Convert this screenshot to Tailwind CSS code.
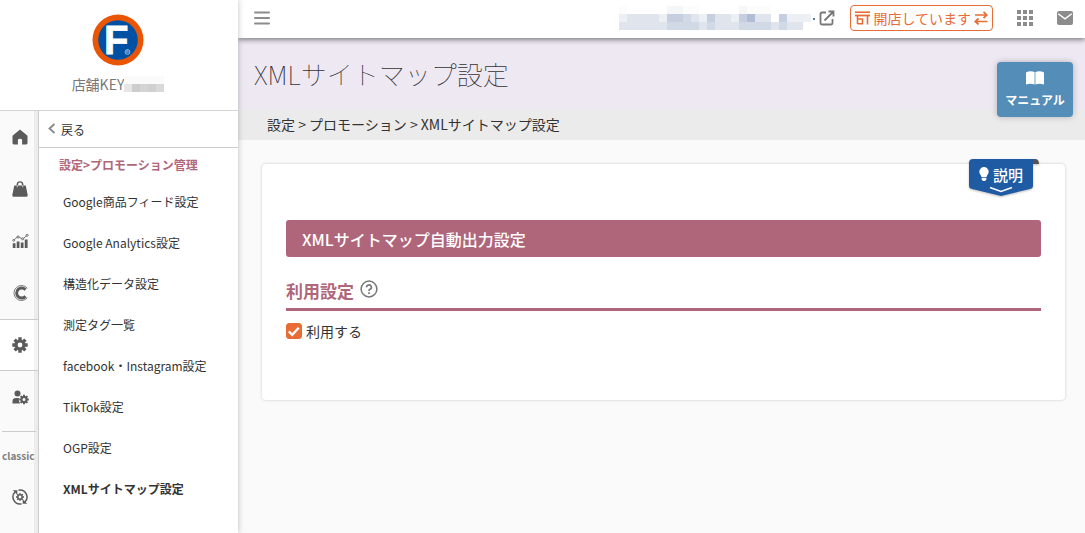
<!DOCTYPE html>
<html lang="ja">
<head>
    <meta charset="UTF-8">
    <meta name="viewport" content="width=device-width, initial-scale=1.0">
    <title>XMLサイトマップ設定</title>
    <script src="https://cdn.jsdelivr.net/npm/@tailwindcss/browser@4"></script>
</head>
<body class="min-h-screen flex bg-[#fafafa] text-[#333] font-['Noto_Sans_CJK_JP',sans-serif]">

    <!-- Sidebar -->
    <aside class="relative z-20 w-[238px] shrink-0 min-h-screen flex flex-col bg-white shadow-[0_0_6px_rgba(0,0,0,0.25)]">
        <div class="h-[111px] pt-[14px] pr-[2px] flex flex-col items-center border-b border-[#d4d4d4]">
            <svg class="w-[52px] h-[52px]" viewBox="0 0 52 52" role="img" aria-label="F">
                <circle cx="26" cy="26" r="25.5" fill="#ea5504"/>
                <circle cx="26" cy="26" r="19.8" fill="#0050a4"/>
                <text x="12" y="40" font-family="Liberation Sans, sans-serif" font-weight="700" font-size="40" fill="#fff" stroke="#fff" stroke-width="0.8">F</text>
                <circle cx="35.5" cy="38" r="2.4" fill="none" stroke="#b9cfe8" stroke-width="0.8"/>
                <path d="M34.8 39.4v-2.7h1.1l.4.7-.5.6h-1m1 0 .6 1.3" fill="none" stroke="#b9cfe8" stroke-width="0.6"/>
            </svg>
            <div class="mt-2 flex items-center text-sm leading-5 text-[#777]">
                <span>店舗KEY</span>
                <svg class="w-10 h-4" viewBox="0 0 40 16" shape-rendering="crispEdges" aria-hidden="true">
                    <path fill="#fafafa" d="M0 0h40v8H0z"/>
                    <path fill="#e6e6e6" d="M0 8h8v8H0z"/><path fill="#cdcdcd" d="M8 8h8v8H8z"/>
                    <path fill="#d4d4d4" d="M16 8h8v8h-8z"/><path fill="#d0d0d0" d="M24 8h8v8h-8z"/><path fill="#d9d9d9" d="M32 8h8v8h-8z"/>
                </svg>
            </div>
        </div>

        <div class="flex flex-1">
            <!-- Icon rail -->
            <nav class="w-[39px] shrink-0 flex flex-col bg-[#fafafa] border-r border-[#ccc] shadow-[inset_-4px_0_0_#ececec] text-[#5b5b5b]" aria-label="メインメニュー">
                <a href="#" aria-label="ホーム" class="h-[52px] pl-3 flex items-center">
                    <svg class="w-4 h-4" viewBox="0 0 16 16" fill="currentColor"><path d="M8 .4.5 6.8V14q0 1.4 1.4 1.4h4V11q0-1.2 2.1-1.2t2.1 1.2v4.400h4q1.400 0 1.400-1.400V6.800z"/></svg>
                </a>
                <a href="#" aria-label="商品" class="h-[52px] pl-3 flex items-center">
                    <svg class="w-4 h-4" viewBox="0 0 16 16" fill="currentColor"><path d="M4.500 4.500V4a3.500 3.800 0 0 1 7 0v.500h2.200L15.700 14q.200 1.800-1.200 1.800h-13Q.100 15.800.300 14l2-9.500zM6 4.500h4V4a2 2.400 0 0 0-4 0z"/><path d="M5.200 4v2.300M10.800 4v2.300" stroke="#fafafa" stroke-width=".7"/></svg>
                </a>
                <a href="#" aria-label="分析" class="h-[52px] pl-3 flex items-center">
                    <svg class="w-[17px] h-4" viewBox="0 0 18 16" fill="currentColor"><path d="M.8 10.500h2.900v5H.8zM5 8.500h2.900v7H5zM9.300 9.500h2.900v6H9.300zM13.500 6.500h3v9h-3z"/><g fill="none" stroke="currentColor" stroke-width=".9"><path d="m2.500 6.500 3-2.500m2 0 3 1.500m1.700-.300 3-2.600"/><circle cx="1.800" cy="7.300" r="1"/><circle cx="6.400" cy="3.700" r="1.100"/><circle cx="11.300" cy="5.700" r="1.100"/><circle cx="16" cy="2" r="1.100"/></g></svg>
                </a>
                <a href="#" aria-label="クリエイター" class="h-[52px] pl-[13px] flex items-center">
                    <svg class="w-4 h-4" viewBox="0 0 16 16" fill="none" stroke="currentColor"><path d="M14.300 3.300A7.500 7.500 0 1 0 14.300 12.700" stroke-width=".8"/><path d="M12.500 4.800A5 5 0 1 0 12.500 11.200" stroke-width="2.900"/></svg>
                </a>
                <a href="#" aria-label="設定" class="h-[52px] pl-3 flex items-center bg-white border-y border-[#ccc] shadow-[inset_-4px_0_0_#f3f3f3]">
                    <svg class="w-4 h-4" viewBox="0 0 16 16" fill="none" stroke="currentColor"><circle cx="8" cy="8" r="4" stroke-width="3.200"/><g stroke-width="3.400"><path d="M8 .3v2.700M8 13v2.700M.3 8H3M13 8h2.700M2.600 2.600l1.900 1.900M11.500 11.500l1.900 1.900M2.600 13.400l1.900-1.900M11.500 4.500l1.900-1.900"/></g></svg>
                </a>
                <a href="#" aria-label="会員設定" class="h-[52px] pl-3 flex items-center">
                    <svg class="w-[18px] h-4" viewBox="0 0 18 16" fill="currentColor"><circle cx="5.500" cy="4.500" r="3"/><path d="M.5 14.500v-2.300Q.5 9 4 9h3q-.8 3 1.200 5.500z"/><g fill="none" stroke="currentColor"><circle cx="12" cy="10.500" r="2.500" stroke-width="2"/><path d="M12 5.700v2M12 13.300v2M7.200 10.500h2M14.800 10.500h2M8.600 7.100 10 8.500M14 12.500l1.400 1.400M8.600 13.900l1.400-1.400M14 8.500l1.400-1.400" stroke-width="2"/></g></svg>
                </a>
                <hr class="mt-2 ml-[2px] mr-[2px] border-[#ccc]">
                <a href="#" class="h-12 pl-[2px] flex items-center text-[10px] leading-4 font-bold text-[#808080]">classic</a>
                <a href="#" aria-label="設定の更新" class="h-[34px] pl-3 flex items-center">
                    <svg class="w-4 h-4" viewBox="0 0 16 16" fill="none" stroke="currentColor"><path d="M6.500 1.200A7 7 0 0 1 13 12.900M9.500 14.800A7 7 0 0 1 3 3.100" stroke-width="1.500"/><path d="M.8 1.200H5.300V5.700zM15.200 14.800h-4.500v-4.500z" fill="currentColor" stroke="none"/><circle cx="8" cy="8" r="2.200" stroke-width="1.500"/><path d="M8 4v1.800M8 10.200V12M4 8h1.800M10.200 8H12M5.200 5.200l1.200 1.200M9.600 9.600l1.200 1.200M5.200 10.800l1.200-1.200M9.600 6.400l1.200-1.200" stroke-width="1.300"/></svg>
                </a>
            </nav>

            <!-- Sub menu -->
            <nav class="flex-1 text-xs" aria-label="サブメニュー">
                <a href="#" class="h-[37px] pl-[9px] flex items-center gap-[5px] border-b border-[#ccc]">
                    <svg class="w-2 h-3" viewBox="0 0 8 12" fill="none" stroke="#888" stroke-width="1.800"><path d="M6.500 1 1.500 5.500l5 4.500"/></svg>
                    <span class="pt-[2px]">戻る</span>
                </a>
                <h2 class="h-[34px] pl-5 flex items-center font-bold text-[#b0667a]">設定&gt;プロモーション管理</h2>
                <ul>
                    <li><a href="#" class="h-[41px] pl-6 pb-[2px] flex items-center">Google商品フィード設定</a></li>
                    <li><a href="#" class="h-[41px] pl-6 pb-[2px] flex items-center">Google Analytics設定</a></li>
                    <li><a href="#" class="h-[41px] pl-6 pb-[2px] flex items-center">構造化データ設定</a></li>
                    <li><a href="#" class="h-[41px] pl-6 pb-[2px] flex items-center">測定タグ一覧</a></li>
                    <li><a href="#" class="h-[41px] pl-6 pb-[2px] flex items-center">facebook・Instagram設定</a></li>
                    <li><a href="#" class="h-[41px] pl-6 pb-[2px] flex items-center">TikTok設定</a></li>
                    <li><a href="#" class="h-[41px] pl-6 pb-[2px] flex items-center">OGP設定</a></li>
                    <li><a href="#" aria-current="page" class="h-[41px] pl-6 pb-[2px] flex items-center font-bold">XMLサイトマップ設定</a></li>
                </ul>
            </nav>
        </div>
    </aside>

    <div class="flex-1 min-w-0">
        <!-- Top bar -->
        <header class="relative z-10 h-[38px] pl-4 pr-3 pb-[2px] flex items-center bg-white shadow-[0_2px_5px_rgba(0,0,0,0.45)]">
            <button type="button" aria-label="メニュー">
                <svg class="w-4 h-4" viewBox="0 0 16 16" stroke="#8c8c8c" stroke-width="2" stroke-linecap="round"><path d="M1 2.500h14M1 8h14M1 13.500h14"/></svg>
            </button>
            <a href="#" aria-label="店舗ページを開く" class="ml-auto flex items-center">
                <svg class="w-[200px] h-6" viewBox="0 0 200 24" shape-rendering="crispEdges" aria-hidden="true">
                    <path fill="#fcfcfc" d="M0 0h8v8H0zM64 0h16v8H64zM128 0h24v8h-24z"/>
                    <path fill="#f5f6f8" d="M48 0h8v8h-8zM56 0h8v8h-8zM120 0h8v8h-8z"/>
                    <path fill="#eceff4" d="M0 8h8v8H0zM40 8h8v8h-8zM80 8h8v8h-8zM112 8h8v8h-8zM168 8h24v8h-24z"/>
                    <path fill="#dfe4ed" d="M8 8h32v8H8zM72 8h8v8h-8zM96 8h16v8H96zM136 8h16v8h-16zM0 16h48v8H0zM80 16h8v8h-8zM96 16h24v8H96zM152 16h8v8h-8zM168 16h16v8h-16z"/>
                    <path fill="#c5cfdf" d="M48 8h16v8H48zM88 8h8v8h-8zM120 8h8v8h-8zM160 8h8v8h-8z"/>
                    <path fill="#d0d9e5" d="M64 8h8v8h-8zM48 16h32v8H48zM88 16h8v8h-8zM120 16h32v8h-32zM160 16h8v8h-8z"/>
                    <path fill="#b0bed5" d="M128 8h8v8h-8z"/>
                    <path fill="#5279ad" d="M194 12h2v2h-2z"/>
                </svg>
                <svg class="w-4 h-4" viewBox="0 0 16 16" fill="none" stroke="#777" stroke-width="1.800"><path d="M7 2.500H3Q1.500 2.500 1.500 4v9q0 1.500 1.500 1.500h9q1.500 0 1.500-1.500V9M5.500 10.500 14 2M9.500 1.500h5v5"/></svg>
            </a>
            <button type="button" class="ml-[15px] h-[26px] px-1 flex items-center gap-[3px] border border-[#e86c35] rounded-[4px] text-sm text-[#e86c35]">
                <svg class="w-[15px] h-[14px]" viewBox="0 0 15 14" fill="none" stroke="currentColor"><path d="M0 1.200h15" stroke-width="1.600"/><path d="M0 4.500h15" stroke-width="1.800"/><path d="M2.500 5v8M12.500 5v8.500M2 8h5.500v5.200M2.500 12.700h5.500" stroke-width="1.600"/></svg>
                開店しています
                <svg class="w-[14px] h-[14px]" viewBox="0 0 14 14" fill="none" stroke="currentColor" stroke-width="1.700"><path d="M1 4h11.500M9.500 .8 12.800 4 9.500 7M13.500 10.500H1.500M4.500 7.500 1.200 10.500l3.300 3"/></svg>
            </button>
            <button type="button" aria-label="アプリ一覧" class="ml-6">
                <svg class="w-4 h-4" viewBox="0 0 16 16" fill="#8c8c8c"><path d="M0 0h4v4H0zM6 0h4v4H6zM12 0h4v4h-4zM0 6h4v4H0zM6 6h4v4H6zM12 6h4v4h-4zM0 12h4v4H0zM6 12h4v4H6zM12 12h4v4h-4z"/></svg>
            </button>
            <button type="button" aria-label="メール" class="ml-6">
                <svg class="w-4 h-4" viewBox="0 0 16 16"><rect y="1" width="16" height="14" rx="2" fill="#8c8c8c"/><path d="m1.200 3.800 6.800 5 6.800-5" fill="none" stroke="#fff" stroke-width="1.400"/></svg>
            </button>
        </header>

        <div class="relative">
            <h1 class="h-[71px] pl-4 flex items-center bg-[#eee8f3] text-[26px] leading-10 font-thin">XMLサイトマップ設定</h1>
            <div class="h-[31px] pl-[29px] pb-[2px] flex items-center bg-[#ebebeb] text-sm">設定 &gt; プロモーション &gt; XMLサイトマップ設定</div>
            <a href="#" class="absolute right-3 top-6 w-[76px] h-[55px] pt-[9px] flex flex-col items-center gap-[7px] rounded-[4px] bg-[#548db7] text-white text-xs font-bold shadow-[0_0_6px_rgba(0,0,0,0.25)]">
                <svg class="w-[18px] h-[14px]" viewBox="0 0 18 14" fill="#fff"><path d="M0 1.500Q4 -.8 8.600 1v12.500Q4.500 11.800 0 13.500zM18 1.500Q14 -.8 9.400 1v12.500q4.100-1.700 8.600 0z"/></svg>
                マニュアル
            </a>
        </div>

        <!-- Settings card -->
        <main class="relative mt-6 ml-6 mr-5 min-h-[236px] px-6 pt-14 rounded-[4px] bg-white shadow-[0_0_3px_rgba(0,0,0,0.2)]">
            <button type="button" class="absolute -top-[5px] right-[26px] w-[70px] h-[38px] pl-[10px] pt-[6px] flex items-start gap-1 text-white text-[15px] leading-5 font-medium">
                <svg class="absolute inset-0 w-[70px] h-[38px] drop-shadow-[0_1px_1px_rgba(0,0,0,0.25)]" viewBox="0 0 70 38" aria-hidden="true">
                    <path d="M60 0h6q4 0 4 5H60z" fill="#555"/>
                    <path d="M4 0h60v27q0 2-2 2.700L32 37 2 29.700Q0 29 0 27V4q0-4 4-4z" fill="#1f5ba3"/>
                    <path d="m21 28.500 11 4 11-4" fill="none" stroke="#fff" stroke-width="1.400"/>
                </svg>
                <svg class="relative mt-[2px] w-[10px] h-[14px]" viewBox="0 0 10 14" fill="#fff"><path d="M5 0a4.700 4.700 0 0 1 4.700 4.700C9.700 7 7.800 8 7.500 10h-5C2.200 8 .3 7 .3 4.700A4.700 4.700 0 0 1 5 0zM2.600 10.700h4.800v1.600L6.200 14H3.800l-1.200-1.700z"/></svg>
                <span class="relative">説明</span>
            </button>

            <h2 class="h-[37px] px-4 flex items-center rounded-[3px] bg-[#b0667a] text-white text-base font-medium">XMLサイトマップ自動出力設定</h2>

            <div class="mt-[18px] h-[33px] flex items-start gap-[6px] border-b-3 border-[#b0667a] text-[#b0667a] box-content">
                <h3 class="pt-1 text-[17px] leading-6 font-bold">利用設定</h3>
                <button type="button" aria-label="ヘルプ" class="pt-[5px]">
                    <svg class="w-[18px] h-[18px]" viewBox="0 0 18 18" fill="none" stroke="#777" stroke-width="1.500"><circle cx="9" cy="9" r="7.900"/><path d="M6.600 7.200a2.400 2.200 0 1 1 3.600 1.900Q9 9.700 9 10.900M9 12.200v1.700" stroke-width="1.700"/></svg>
                </button>
            </div>

            <label class="mt-2 flex items-center gap-1 text-sm leading-6">
                <span class="relative w-4 h-4">
                    <input type="checkbox" checked class="block w-4 h-4 appearance-none rounded-[3px] border border-[#e86c35] checked:bg-[#e86c35]">
                    <svg class="absolute inset-0 w-4 h-4 pointer-events-none" viewBox="0 0 16 16" fill="none" stroke="#fff" stroke-width="2.400"><path d="m2.800 8.300 3.400 3.500 6.600-7"/></svg>
                </span>
                利用する
            </label>
        </main>
    </div>

</body>
</html>
